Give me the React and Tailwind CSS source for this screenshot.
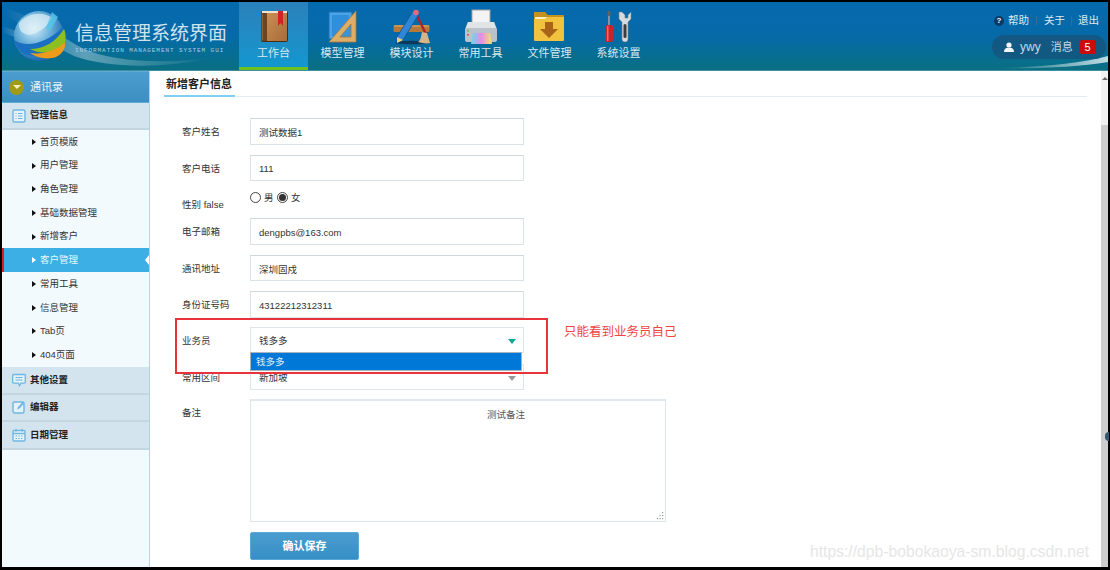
import React from 'react';

const navItems = [
  { label: '工作台', icon: BookIcon, active: true },
  { label: '模型管理', icon: RulerIcon },
  { label: '模块设计', icon: DesignIcon },
  { label: '常用工具', icon: PrinterIcon },
  { label: '文件管理', icon: FolderIcon },
  { label: '系统设置', icon: ToolsIcon },
];

const menuItems = ['首页模版', '用户管理', '角色管理', '基础数据管理', '新增客户', '客户管理', '常用工具', '信息管理', 'Tab页', '404页面'];

function BookIcon() {
  return (
    <svg width="40" height="36" viewBox="0 0 40 36">
      <defs>
        <linearGradient id="bookFill" x1="0" x2="1" y1="0" y2="1">
          <stop offset="0" stopColor="#c98f55" />
          <stop offset="1" stopColor="#a86c38" />
        </linearGradient>
      </defs>
      <rect x="7" y="2" width="27" height="31" rx="2" fill="#4a2d17" />
      <rect x="7" y="3" width="6" height="29" fill="#6b4423" />
      <rect x="13" y="3" width="20" height="29" fill="url(#bookFill)" />
      <rect x="8" y="2" width="25" height="2" fill="#efe3d0" />
      <path d="M24 2h5v15l-2.500-3-2.500 3z" fill="#d3202a" />
      <path d="M8.500 5v26" stroke="#8f6237" strokeWidth="1" />
    </svg>
  );
}

function RulerIcon() {
  return (
    <svg width="40" height="36" viewBox="0 0 40 36">
      <rect x="6" y="3" width="23" height="27" fill="#4aa4e8" stroke="#1f6fb5" />
      <rect x="9" y="6" width="17" height="21" fill="#2f8fdc" />
      <path d="M33 2v31H6z" fill="#dcae68" stroke="#a87a38" strokeWidth="0.8" />
      <path d="M28 15v13H17z" fill="#3b93d8" stroke="#a87a38" strokeWidth="0.8" />
    </svg>
  );
}

function DesignIcon() {
  return (
    <svg width="40" height="36" viewBox="0 0 40 36">
      <ellipse cx="20" cy="33.500" rx="17" ry="1.800" fill="#0b3a5c" />
      <path d="M3 16h33a1.500 1.500 0 0 1 1.500 1.500v4a1.500 1.500 0 0 1-1.500 1.500H3a1.500 1.500 0 0 1-1.500-1.500v-4A1.500 1.500 0 0 1 3 16z" fill="#b5793b" />
      <path d="M2 17h35" stroke="#dcae68" />
      <path d="M24 5l10 20" stroke="#b3202a" strokeWidth="2.400" />
      <path d="M30 23l5 1 3 10c-4 1-8 0-12-1 3-2 3-6 4-10z" fill="#d8b486" />
      <path d="M21 2l6 3L11 31l-6 3 0-6z" fill="#2e86d6" stroke="#14508c" strokeWidth="0.800" />
      <path d="M5 28l6 3-6 3z" fill="#f2d16b" />
      <circle cx="24" cy="3.500" r="2.800" fill="#e36a80" />
    </svg>
  );
}

function PrinterIcon() {
  return (
    <svg width="40" height="36" viewBox="0 0 40 36">
      <rect x="11" y="1" width="18" height="15" fill="#f4f4f4" stroke="#9aa5ad" />
      <path d="M7 13h26l3 7v11a2 2 0 0 1-2 2H6a2 2 0 0 1-2-2V20z" fill="#b9c2c8" />
      <path d="M7 13h26l2 6H5z" fill="#dfe4e7" />
      <rect x="6" y="21" width="2" height="1.500" fill="#68c04a" />
      <rect x="6" y="25" width="2" height="1.500" fill="#d9534f" />
      <defs>
        <linearGradient id="printInk" x1="0" x2="1" y1="0" y2="0">
          <stop offset="0" stopColor="#66dcea" />
          <stop offset="0.500" stopColor="#e68ce6" />
          <stop offset="1" stopColor="#f3e36b" />
        </linearGradient>
      </defs>
      <path d="M12 24h17l2 11H10z" fill="url(#printInk)" />
    </svg>
  );
}

function FolderIcon() {
  return (
    <svg width="40" height="36" viewBox="1 0 40 36">
      <path d="M5 3h11l3 3h15a1 1 0 0 1 1 1v24H5z" fill="#c4901f" />
      <path d="M6 8h28v3H6z" fill="#fbf1c8" />
      <path d="M5 10h11l2-2h17v23a1 1 0 0 1-1 1H6a1 1 0 0 1-1-1z" fill="#f0c23e" />
      <path d="M16 13h8v7h5l-9 9-9-9h5z" fill="#a9641a" />
    </svg>
  );
}

function ToolsIcon() {
  return (
    <svg width="40" height="36" viewBox="1 0 40 36">
      <rect x="10" y="2" width="2" height="14" fill="#8b9399" />
      <rect x="9.500" y="2" width="3" height="5" rx="1" fill="#5c6469" />
      <rect x="7" y="16" width="8" height="17" rx="2" fill="#c8242c" />
      <rect x="9" y="17" width="1.500" height="15" fill="#ea6a6e" />
      <path d="M21 3v7l3 3v17a3 3 0 0 0 6 0V13l3-3V3l-3 3v3h-3V6l-3-3z" fill="#d5dbdf" stroke="#7a8388" strokeWidth="0.600" />
      <rect x="25.500" y="15" width="3" height="14" rx="1.500" fill="#3a3f42" />
    </svg>
  );
}

function Logo() {
  return (
    <svg className="absolute left-0 top-0" width="239" height="69" viewBox="0 0 239 69">
      <defs>
        <radialGradient id="globe" cx="0.400" cy="0.350" r="0.700">
          <stop offset="0" stopColor="#d6eef8" />
          <stop offset="0.450" stopColor="#6fb4dc" />
          <stop offset="1" stopColor="#0c5ea8" />
        </radialGradient>
        <linearGradient id="streak" x1="0" x2="1" y1="0" y2="0">
          <stop offset="0" stopColor="#ffffff" stopOpacity="0" />
          <stop offset="0.400" stopColor="#ffffff" stopOpacity="0.350" />
          <stop offset="1" stopColor="#ffffff" stopOpacity="0" />
        </linearGradient>
      </defs>
      <path d="M0 6C25 10 48 28 80 46 110 60 160 62 210 56 160 67 105 66 72 54 40 38 20 20 0 13z" fill="url(#streak)" />
      <path d="M0 24C20 30 40 40 60 48 30 42 15 36 0 30z" fill="url(#streak)" />
      <circle cx="37" cy="34" r="25" fill="url(#globe)" />
      <path d="M17 21c8-10 24-12 33-5-3 7-13 15-22 17-7 0-12-5-11-12z" fill="#e3f1f8" opacity="0.700" />
      <path d="M12 38c12 8 32 4 49-13l2 12c-8 14-27 20-41 15-5-3-8-8-10-14z" fill="#1a6fc0" />
      <path d="M28 47c14 0 26-7 34-20 2 4 2 9 1 14-9 9-22 13-35 6z" fill="#8cc021" />
      <path d="M28 51c14 2 27-3 35-11 1 7-3 12-9 15-9 3-19 1-26-4z" fill="#ee9a1a" />
      <path d="M50 10l6 5-8 14-4-3z" fill="#58c7e8" opacity="0.800" />
    </svg>
  );
}

function SideIcon({ type }) {
  const color = '#6fb6e0';
  if (type === 'list') {
    return (
      <svg width="14" height="14" viewBox="0 0 14 14" fill="none" stroke={color}>
        <rect x="1" y="1" width="12" height="12" rx="1.500" fill="#e6f2f9" strokeWidth="1.400" />
        <path d="M3.500 4.500h1M6 4.500h4.500M3.500 7h1M6 7h4.500M3.500 9.500h1M6 9.500h4.500" />
      </svg>
    );
  }
  if (type === 'chat') {
    return (
      <svg width="14" height="14" viewBox="0 0 14 14" fill="none" stroke={color}>
        <path d="M1.500 1.500h11a.8.8 0 0 1 .8.800v7a.8.8 0 0 1-.8.800H9l-1.500 2.500-1-2.500H1.500a.8.8 0 0 1-.8-.800v-7a.8.8 0 0 1 .8-.800z" fill="#e6f2f9" strokeWidth="1.300" />
        <path d="M3.500 4.500h7M3.500 7h7" />
      </svg>
    );
  }
  if (type === 'edit') {
    return (
      <svg width="14" height="14" viewBox="0 0 14 14" fill="none" stroke={color}>
        <rect x="1" y="2" width="11" height="11" rx="1.500" fill="#e6f2f9" strokeWidth="1.400" />
        <path d="M5 9.500l1-2.500 5-5.500 1.500 1.500-5 5.500z" fill={color} stroke="none" />
      </svg>
    );
  }
  return (
    <svg width="14" height="14" viewBox="0 0 14 14" fill="none" stroke={color}>
      <rect x="1" y="2.500" width="12" height="10.500" rx="1" fill="#e6f2f9" strokeWidth="1.400" />
      <path d="M1 5.500h12M4 1v2.500M10 1v2.500" strokeWidth="1.300" />
      <path d="M3.500 8h1.500M6.250 8h1.500M9 8h1.500M3.500 10.500h1.500M6.250 10.500h1.500M9 10.500h1.500" />
    </svg>
  );
}

function GroupHeader({ icon, label, className }) {
  return (
    <div className={`flex items-center gap-[4px] pl-[10px] bg-[#d3e4ef] border-b-2 border-[#c3d6e2] text-[9.500px] font-bold text-[#222] ${className}`}>
      <SideIcon type={icon} />
      <span>{label}</span>
    </div>
  );
}

function Sidebar() {
  return (
    <aside className="w-[148px] shrink-0 bg-[#f3fafe] border-r border-[#b3d3e5] flex flex-col">
      <div className="h-[32px] flex items-center gap-[6px] pl-[7px] bg-gradient-to-b from-[#4b9dcf] to-[#3d8fc3] border-y border-[#5fabd8] text-[11px] text-[#e6f3fa]">
        <span className="w-[15px] h-[15px] rounded-full bg-[#a09a14] flex items-center justify-center">
          <span className="w-0 h-0 border-x-[4px] border-x-transparent border-t-[4px] border-t-[#f7efc4]" />
        </span>
        <span>通讯录</span>
      </div>
      <GroupHeader icon="list" label="管理信息" className="h-[27px]" />
      <ul>
        {menuItems.map((item) => {
          const active = item === '客户管理';
          return (
            <li
              key={item}
              className={`h-[23.700px] flex items-center text-[9.500px] relative ${active ? 'bg-[#3cb0e4] text-[#e8f6fd]' : 'text-[#333]'}`}
            >
              {active && <span className="absolute left-0 top-0 bottom-0 w-[2px] bg-[#d61f2b]" />}
              <span className={`ml-[30px] mr-[4px] w-0 h-0 border-y-[3px] border-y-transparent border-l-[4px] ${active ? 'border-l-white' : 'border-l-[#111]'}`} />
              <span>{item}</span>
              {active && (
                <span className="absolute right-0 top-[7px] w-0 h-0 border-y-[5px] border-y-transparent border-r-[4px] border-r-white" />
              )}
            </li>
          );
        })}
      </ul>
      <GroupHeader icon="chat" label="其他设置" className="h-[28px]" />
      <GroupHeader icon="edit" label="编辑器" className="h-[27px]" />
      <GroupHeader icon="calendar" label="日期管理" className="h-[28px]" />
    </aside>
  );
}

function Header() {
  return (
    <header className="h-[69px] shrink-0 relative flex bg-gradient-to-b from-[#0569ae] via-[#066aa8] to-[#0b6f82] border-b border-[#3f8f9f]">
      <Logo />
      <svg className="absolute right-0 bottom-0" width="110" height="14" viewBox="0 0 110 14">
        <defs>
          <linearGradient id="rightStreak" x1="0" x2="1" y1="0" y2="0">
            <stop offset="0" stopColor="#ffffff" stopOpacity="0" />
            <stop offset="1" stopColor="#ffffff" stopOpacity="0.750" />
          </linearGradient>
        </defs>
        <path d="M0 12C40 11 80 8 110 0v6C80 11 40 13 0 12z" fill="url(#rightStreak)" />
      </svg>
      <div className="relative w-[237px] shrink-0 pl-[73px] pt-[21px]">
        <div className="text-[19px] leading-[22px] text-[#cfe2ee] whitespace-nowrap">信息管理系统界面</div>
        <div className="text-[6px] leading-[8px] mt-[2px] tracking-[0.92px] text-[#a8cce0] whitespace-nowrap font-['Liberation_Mono',monospace]">INFORMATION MANAGEMENT SYSTEM GUI</div>
      </div>
      <nav className="relative flex">
        {navItems.map(({ label, icon: Icon, active }) => (
          <div
            key={label}
            className={`w-[69px] flex flex-col items-center pt-[7px] text-[11px] leading-[14px] text-[#d7e8f2] ${active ? 'bg-gradient-to-b from-[#2a80ba] to-[#1197cf] border-b-[3px] border-[#6fc01c]' : ''}`}
          >
            <Icon />
            <span className="mt-[1px]">{label}</span>
          </div>
        ))}
      </nav>
      <div className="relative ml-auto w-[118px] flex flex-col items-end">
        <div className="flex items-center h-[14px] mt-[12px] pr-[9px] text-[10.500px] text-[#dcebf4] whitespace-nowrap">
          <span className="w-[10px] h-[10px] rounded-full bg-[#0c3a66] text-white text-[8px] font-bold leading-[10px] text-center mr-[4px]">?</span>
          <span>帮助</span>
          <span className="w-px h-[10px] bg-[#2f6f9c] mx-[7px]" />
          <span>关于</span>
          <span className="w-px h-[10px] bg-[#2f6f9c] mx-[6px]" />
          <span>退出</span>
        </div>
        <div className="w-[114px] h-[24px] mt-[7px] mr-[2px] rounded-full bg-[#14567f]/90 flex items-center pl-[12px] text-[11px] text-[#c4d9e6]">
          <svg width="10" height="10" viewBox="0 0 10 10" fill="#f2f6f9">
            <circle cx="5" cy="3" r="2.600" />
            <path d="M0 10c0-3 2-4 3.500-4.200h3C8 6 10 7 10 10z" />
          </svg>
          <span className="ml-[6px] text-[12px]">ywy</span>
          <span className="ml-[10px]">消息</span>
          <span className="ml-[7px] w-[16px] h-[14px] rounded-[2px] bg-[#cc0a0a] text-white text-[11px] leading-[14px] text-center">5</span>
        </div>
      </div>
    </header>
  );
}

function FieldLabel({ children, className = 'pt-[2px]' }) {
  return <label className={`w-[68px] shrink-0 text-[9.500px] text-[#333] ${className}`}>{children}</label>;
}

function TextRow({ label, value, className }) {
  return (
    <div className={`flex items-center ${className}`}>
      <FieldLabel>{label}</FieldLabel>
      <input
        readOnly
        value={value}
        className="w-[274px] h-full px-[8px] pt-[1px] text-[9.500px] text-[#333] bg-white border border-[#dbe3ea] border-t-[#cfd8e0] outline-none"
      />
    </div>
  );
}

function SelectRow({ label, value, arrowClass, className, children }) {
  return (
    <div className={`flex items-center relative ${className}`}>
      <FieldLabel>{label}</FieldLabel>
      <div className="w-[274px] h-full pl-[8px] pr-[7px] pt-[2px] flex items-center justify-between text-[9.500px] text-[#333] bg-white border border-[#dfe5ea]">
        <span>{value}</span>
        <span className={`w-0 h-0 border-x-[4.500px] border-x-transparent border-t-[5px] ${arrowClass}`} />
      </div>
      {children}
    </div>
  );
}

function Radio({ checked, label }) {
  return (
    <span className="flex items-center">
      <span className="w-[11px] h-[11px] rounded-full border border-[#444] bg-white flex items-center justify-center">
        {checked && <span className="w-[7px] h-[7px] rounded-full bg-[#333]" />}
      </span>
      <span className="ml-[3px] mr-[3px] text-[9.500px] text-[#333] w-[10px] mt-[2px]">{label}</span>
    </span>
  );
}

function CustomerForm() {
  return (
    <form className="pl-[18px] pt-[21px]">
      <TextRow label="客户姓名" value="测试数据1" className="h-[27px]" />
      <TextRow label="客户电话" value="111" className="h-[26px] mt-[10px]" />
      <div className="flex items-start h-[27px] mt-[10px]">
        <FieldLabel className="pt-[7px]">性别 false</FieldLabel>
        <div className="flex items-center h-[13px]">
          <Radio label="男" />
          <Radio label="女" checked />
        </div>
      </div>
      <TextRow label="电子邮箱" value="dengpbs@163.com" className="h-[27px]" />
      <TextRow label="通讯地址" value="深圳固戍" className="h-[26px] mt-[10px]" />
      <TextRow label="身份证号码" value="43122212312311" className="h-[27px] mt-[10px]" />
      <SelectRow label="业务员" value="钱多多" arrowClass="border-t-[#12a79a]" className="h-[26px] mt-[9px]">
        <div className="absolute left-[68px] top-[25px] w-[272px] h-[19px] z-10 bg-[#0078d7] border border-[#a9b4bc] pl-[5px] text-[9.500px] leading-[17px] text-[#e4f1fb]">钱多多</div>
      </SelectRow>
      <SelectRow label="常用区间" value="新加坡" arrowClass="border-t-[#999]" className="h-[26px] mt-[11px]" />
      <div className="flex items-start mt-[9px]">
        <FieldLabel className="pt-[7px]">备注</FieldLabel>
        <div className="w-[416px] h-[123px] border border-[#dfe5ea] border-t-2 border-t-[#e2e8ed] bg-white pt-[7px] pl-[236px] text-[9.500px] text-[#555] relative">
          测试备注
          <svg className="absolute right-[1px] bottom-[1px]" width="8" height="8" viewBox="0 0 8 8" fill="#999">
            <rect x="6" y="0" width="1.200" height="1.200" />
            <rect x="3.500" y="3" width="1.200" height="1.200" />
            <rect x="6" y="3" width="1.200" height="1.200" />
            <rect x="1" y="6" width="1.200" height="1.200" />
            <rect x="3.500" y="6" width="1.200" height="1.200" />
            <rect x="6" y="6" width="1.200" height="1.200" />
          </svg>
        </div>
      </div>
      <button
        type="button"
        className="block ml-[68px] mt-[10px] w-[109px] h-[28px] rounded-[2px] bg-gradient-to-b from-[#4a9ccf] to-[#358fc6] border border-[#5aa8d6] text-[11px] font-bold text-white"
      >
        确认保存
      </button>
    </form>
  );
}

export default function App() {
  return (
    <div className="relative w-[1110px] h-[570px] bg-black pt-[2px] pl-[2px] pr-[2px] pb-[3px] overflow-hidden font-['Liberation_Sans','Noto_Sans_CJK_SC',sans-serif]">
      <div className="w-full h-full bg-white flex flex-col overflow-hidden">
        <Header />
        <div className="flex-1 flex min-h-0">
          <Sidebar />
          <main className="flex-1 px-[14px] min-w-0">
            <div className="h-[26px] border-b border-[#e5ecf2] relative">
              <h1 className="absolute left-[2px] top-[5px] text-[11px] leading-[16px] font-bold text-[#222]">新增客户信息</h1>
              <span className="absolute left-0 bottom-[-1px] w-[71px] h-[2px] bg-[#7fd0f5]" />
            </div>
            <CustomerForm />
          </main>
          <div className="w-[7px] shrink-0 bg-[#f1f1f1] flex flex-col items-center pt-[6px]">
            <span className="w-0 h-0 border-x-[3px] border-x-transparent border-b-[3px] border-b-[#666]" />
            <div className="w-full flex-1 mt-[45px] bg-[#cdcdcd]" />
          </div>
        </div>
      </div>

      {/* notes drawn on top of the screenshot */}
      <div className="absolute left-[175px] top-[318px] w-[373px] h-[56px] border-2 border-[#e8323c] pointer-events-none" />
      <div className="absolute left-[564px] top-[324px] text-[12.500px] leading-[16px] text-[#f0453f] whitespace-nowrap">只能看到业务员自己</div>
      <div className="absolute left-[810px] top-[543px] text-[15.700px] leading-[18px] text-[#e6e6e6] whitespace-nowrap">https://dpb-bobokaoya-sm.blog.csdn.net</div>
      <span className="absolute left-[1105px] top-[432px] w-[4px] h-[9px] rounded-l-full bg-[#33586e]" />
    </div>
  );
}
